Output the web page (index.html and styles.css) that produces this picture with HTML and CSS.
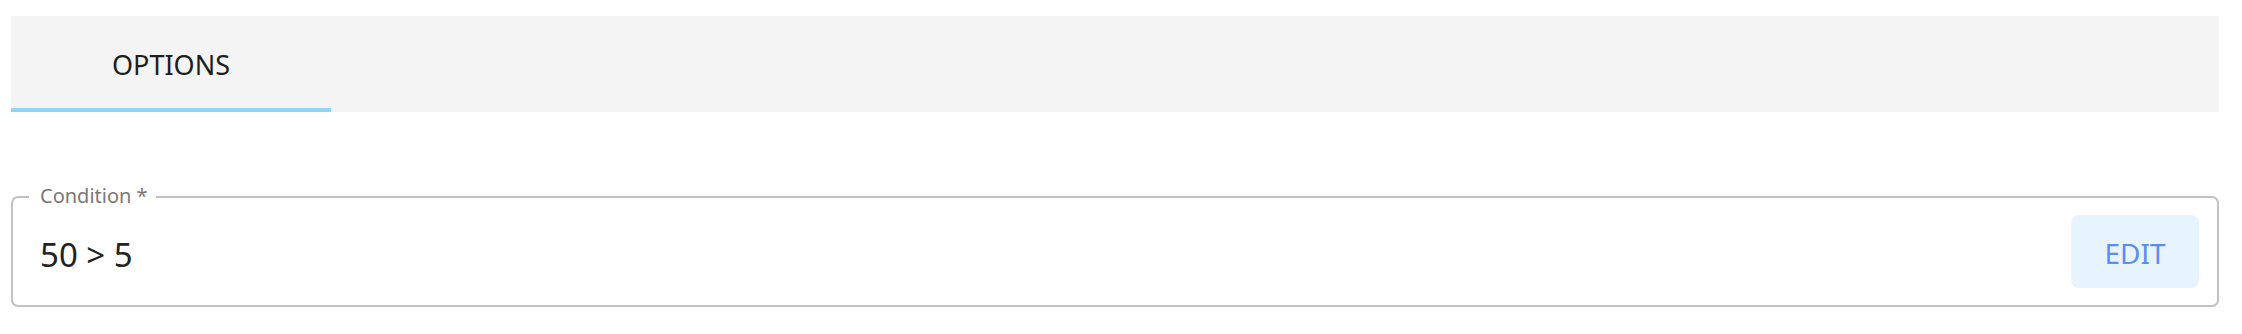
FILE: index.html
```html
<!DOCTYPE html>
<html lang="en">
<head>
    <meta charset="UTF-8">
    <meta name="viewport" content="width=device-width, initial-scale=1.0">
    <title>Options</title>
    <link rel="stylesheet" href="styles.css">
</head>
<body>
    <div class="page">
        <div class="tabs">
            <div class="tab active">OPTIONS</div>
        </div>
        <div class="field">
            <span class="field-label">Condition *</span>
            <div class="field-value">50 &gt; 5</div>
            <button class="edit-btn" type="button">EDIT</button>
        </div>
    </div>
</body>
</html>
```

FILE: styles.css
```css
body {
    margin: 0;
    font-family: "Noto Sans", "Open Sans", sans-serif;
    background-color: #ffffff;
    color: #222222;
}
.page {
    padding: 16px 23px 0 11px;
}
.tabs {
    display: flex;
    height: 96px;
    background-color: #f4f4f4;
}
.tab {
    width: 320px;
    display: flex;
    align-items: center;
    justify-content: center;
    font-size: 27px;
    color: #1e1e1e;
    box-sizing: border-box;
}
.tab.active {
    border-bottom: 4px solid #90d5f7;
    padding-top: 4px;
}
.field {
    position: relative;
    margin-top: 84px;
    height: 111px;
    box-sizing: border-box;
    border: 2px solid #c2c2c2;
    border-radius: 7px;
    display: flex;
    align-items: center;
    padding: 0 18px 0 27px;
}
.field-label {
    position: absolute;
    top: -15px;
    left: 16px;
    padding: 0 8px 0 11px;
    background-color: #ffffff;
    font-size: 20px;
    color: #7a7775;
    line-height: 26px;
}
.field-value {
    flex: 1;
    font-size: 33px;
    color: #222222;
    padding-top: 6px;
}
.edit-btn {
    width: 128px;
    height: 73px;
    border: none;
    border-radius: 8px;
    background-color: #e8f4fd;
    color: #5b8def;
    font-family: inherit;
    font-size: 28px;
    padding-top: 4px;
    cursor: pointer;
}
```
